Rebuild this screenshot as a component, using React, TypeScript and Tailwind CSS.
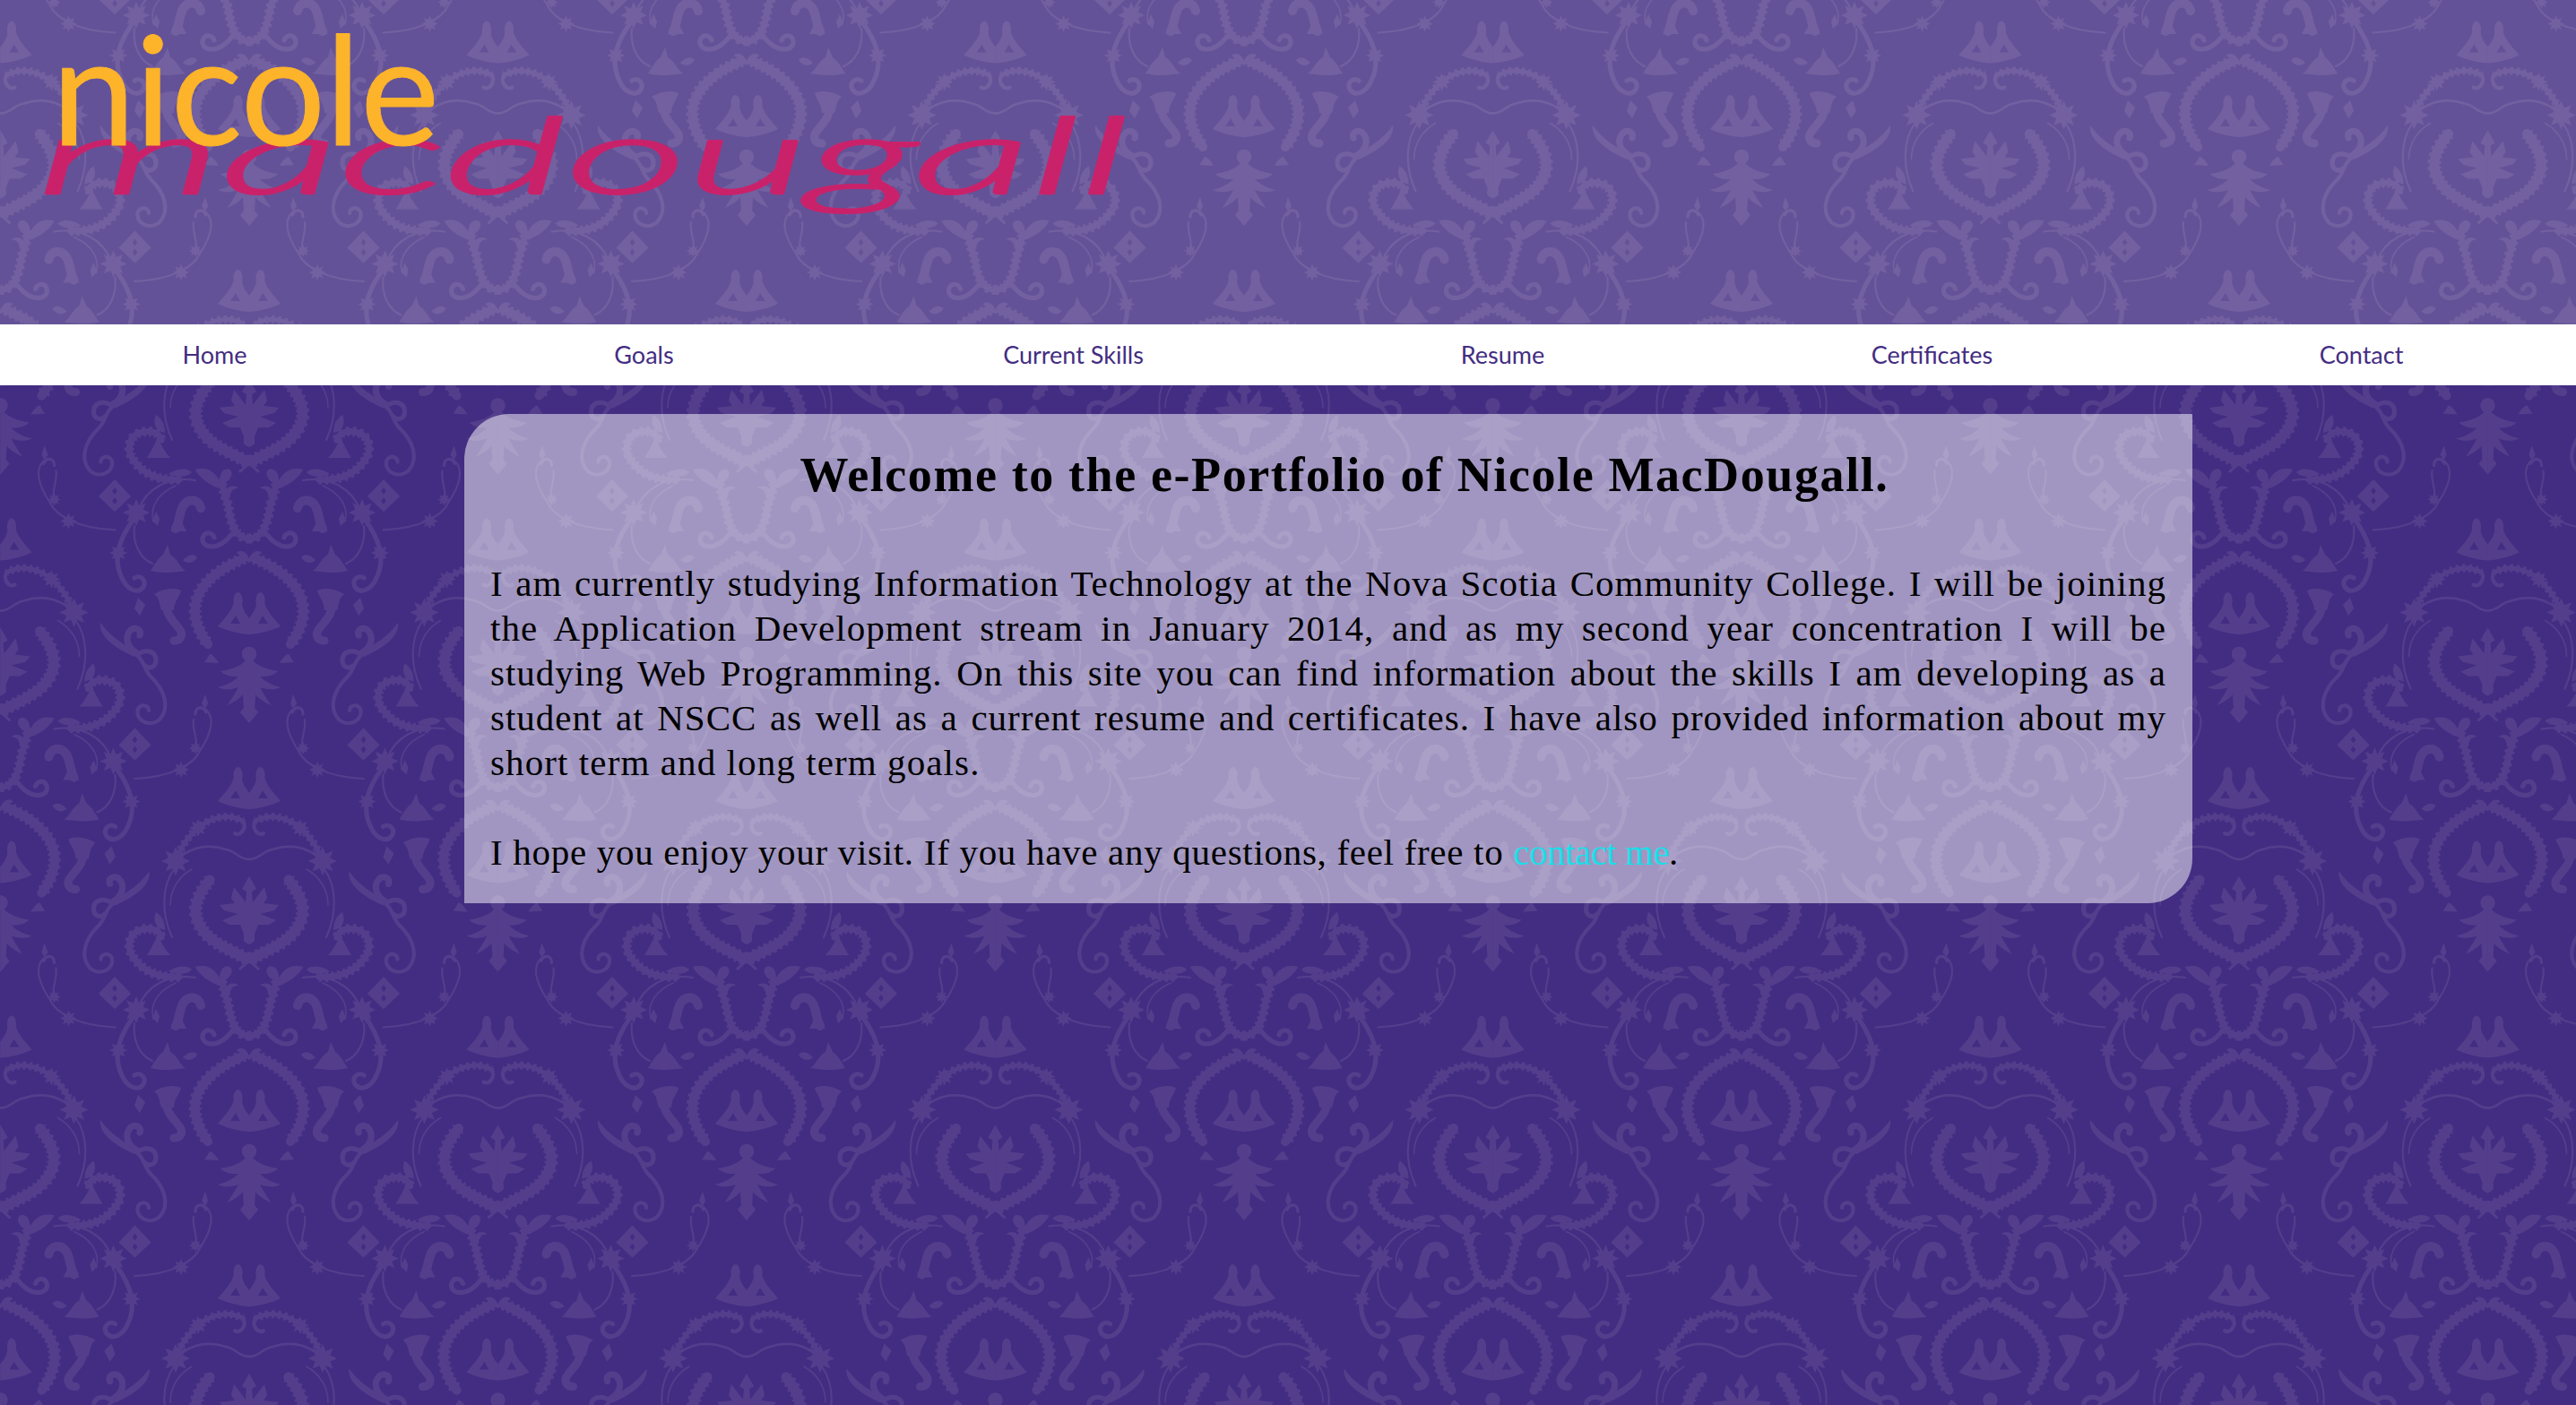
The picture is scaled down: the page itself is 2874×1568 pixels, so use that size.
import React from 'react';

const navItems = ['Home', 'Goals', 'Current Skills', 'Resume', 'Certificates', 'Contact'];

const introLines = [
  'I am currently studying Information Technology at the Nova Scotia Community College. I will be joining',
  'the Application Development stream in January 2014, and as my second year concentration I will be',
  'studying Web Programming. On this site you can find information about the skills I am developing as a',
  'student at NSCC as well as a current resume and certificates. I have also provided information about my',
];

const INK = '#543e8c';

// solid stroke plus a dashed wider one gives the ragged leaf edge of the damask
const Serr: React.FC<{ d: string; w: number }> = ({ d, w }) => (
  <>
    <path d={d} fill="none" stroke={INK} strokeWidth={w} strokeLinecap="round" />
    <path d={d} fill="none" stroke={INK} strokeWidth={w + 4} strokeDasharray="3 4" />
  </>
);

const Line: React.FC<{ d: string; w: number }> = ({ d, w }) => (
  <path d={d} fill="none" stroke={INK} strokeWidth={w} strokeLinecap="round" />
);

const Star: React.FC<{ x: number; y: number; r: number }> = ({ x, y, r }) => {
  const pts = Array.from({ length: 16 }, (_, i) => {
    const a = (i * Math.PI) / 8;
    const rad = i % 2 === 0 ? r : r * 0.55;
    return `${(x + Math.cos(a) * rad).toFixed(1)},${(y + Math.sin(a) * rad).toFixed(1)}`;
  }).join(' ');
  return <polygon points={pts} fill={INK} />;
};

const Figure: React.FC<{ dy: number }> = ({ dy }) => (
  <g transform={`translate(0 ${dy})`} fill={INK}>
    <ellipse cx="12.5" cy="75" rx="5" ry="9" />
    <path
      fillRule="evenodd"
      d="M0 113 C12 112 24 109 35 104 C30 98 26 94 22 88 C19 84 18 80 17 78 L8 78 C8 84 4 90 0 95 Z M10 101 L15 92 L21 101 Z"
    />
  </g>
);

// right half of one damask motif, origin at the bottom of the U
const Half: React.FC = () => (
  <g fill={INK}>
    {/* U tree */}
    <Serr d="M0 6 C8 6 13 2 17 -6 C23 -18 22 -30 26 -38 C29 -48 30 -52 30 -58" w={7} />
    <path d="M30 -52 C36 -68 46 -75 60 -71 C56 -62 44 -54 34 -50 Z" />
    <path d="M27 -56 C20 -60 17 -68 22 -71 C28 -73 33 -68 33 -58 Z" />
    <path d="M22 -40 C20 -48 18 -50 12 -50 C18 -55 26 -52 28 -44 Z" />
    <Line d="M17 -2 C24 8 32 15 42 15 C50 15 54 9 51 3 C48 -2 41 -1 39 5" w={5} />
    {/* hook */}
    <Line d="M54 -28 C56 -38 68 -40 74 -30 C78 -22 78 -12 82 -5" w={10} />
    <path d="M70 -2 L88 -2 L82 -10 L76 -14 Z" />
    {/* bell */}
    <path d="M71 42 C78 38 80 28 88 24 L91 13 L96 24 C102 28 106 36 110 42 C98 45 84 44 71 42 Z" />
    <path d="M58 27 C62 22 68 24 74 30 C68 35 62 33 58 27 Z" />
    {/* arch with figures */}
    <Serr d="M6 28 C24 36 48 48 58 72 C64 90 58 108 46 124" w={10} />
    <Line d="M0 31 C4 24 6 20 12 22" w={3} />
    <Figure dy={0} />
    {/* pendant */}
    <circle cx="0" cy="135" r="8" />
    <path d="M0 138 C8 148 18 152 32 154 C26 160 18 160 12 160 C20 168 28 170 35 172 C26 176 18 174 12 172 C16 180 22 188 24 192 C16 188 10 184 7 180 L6 195 L10 200 L0 212 Z" />
    <path d="M34 145 C38 138 42 135 44 135 C46 138 48 142 50 144 Z" />
    {/* side scroll by the arch */}
    <path d="M76 64 C84 60 96 62 106 68 C100 72 100 80 98 86 L84 86 C84 76 78 72 76 64 Z" />
    <Line d="M92 80 C94 92 80 102 76 110 C74 116 78 120 84 120" w={9} />
    <path d="M116 80 L124 72 L128 84 L122 92 Z" />
    {/* vine and flower */}
    <Line d="M60 -59 C90 -64 115 -50 124 -25" w={2} />
    <Line d="M82 -53 C98 -46 112 -32 107 -13" w={1.5} />
    <path d="M104 -24 L108 -14 L102 -8 L100 -16 Z" />
    <Star x={126} y={-23} r={15} />
    <Line d="M130 -14 C146 8 152 30 142 50 C136 64 124 68 118 60 C114 52 122 46 128 50" w={5} />
    <Star x={146} y={22} r={10} />
    <Line d="M128 -8 C130 12 122 28 108 34" w={2} />
    {/* big scroll */}
    <Serr d="M78 -60 C100 -58 118 -66 128 -80 C138 -92 134 -108 122 -112 C110 -116 100 -112 98 -104" w={7} />
    <path d="M88 -84 L114 -84 C110 -90 106 -98 102 -106 C98 -98 94 -90 88 -84 Z" />
    <path d="M64 -68 C70 -74 82 -72 90 -66 C80 -62 70 -62 64 -68 Z" />
    {/* diamond */}
    <path
      fillRule="evenodd"
      d="M132 -41 L150 -60 L168 -41 L150 -24 Z M147 -47 L150 -51 L153 -47 L150 -43 Z M147 -36 L150 -40 L153 -36 L150 -32 Z"
    />
    {/* S vine */}
    <path d="M166 100 C168 115 150 128 128 138 L124 132 C142 124 154 116 166 100 Z" />
    <Line d="M125 136 C115 146 118 152 110 160 C94 175 88 195 100 208 C112 218 128 208 124 196 C120 190 112 192 112 198" w={4} />
    <Line d="M125 136 C115 128 104 132 104 142 C104 150 112 152 116 148" w={5} />
    <Line d="M125 134 C136 128 140 116 132 108 C126 104 120 108 122 114" w={7} />
    {/* thin sprig */}
    <Line d="M48 197 C40 205 40 220 55 243 C62 258 85 272 128 274" w={2} />
    <Line d="M48 200 C52 192 60 194 60 202" w={3} />
    <Line d="M62 208 C64 220 56 232 60 240" w={2} />
    <path d="M46 190 L49 180 L53 190 L49 196 Z" />
    <Star x={60} y={240} r={7} />
    <Star x={76} y={264} r={9} />
    {/* heart above the U */}
    <Serr d="M3 -80 C24 -92 52 -100 59 -127 C62 -142 54 -156 44 -168" w={11} />
    <Line d="M0 -78 L10 -69" w={3} />
    <path d="M0 -172 L8 -158 L3 -155 L4 -143 L17 -160 L20 -148 L16 -142 L33 -140 L28 -134 L12 -130 L30 -123 L22 -118 L10 -118 L6 -108 L6 -100 L0 -96 Z" />
    <circle cx="0" cy="-103" r="6" />
    {/* ring round the heart */}
    <Serr d="M82 -189 C74 -212 54 -236 30 -238 C20 -240 12 -236 7 -234" w={5} />
    <Line d="M7 -234 C2 -226 10 -216 16 -220" w={4} />
    <Star x={82} y={-189} r={16} />
    <Star x={57} y={-226} r={10} />
    <Line d="M0 -191 C12 -191 14 -200 26 -202 C38 -206 56 -208 74 -196" w={2.5} />
    <Line d="M84 -180 C98 -160 98 -130 86 -104" w={2} />
    <Line d="M64 -180 C78 -172 88 -158 88 -140" w={1.5} />
    <path d="M94 -112 C94 -122 98 -128 104 -132 C108 -122 104 -114 94 -112 Z" />
    <Figure dy={-360} />
  </g>
);

const unitOffsets: [number, number][] = [
  [0, 0],
  [555, 0],
  [0, 555],
  [555, 555],
  [277.5, -277.5],
  [277.5, 277.5],
  [277.5, 832.5],
];

const Damask: React.FC = () => (
  <svg className="absolute inset-0 w-full h-full" aria-hidden="true">
    <defs>
      <g id="damask-half">
        <Half />
      </g>
      <g id="damask-unit">
        <use href="#damask-half" />
        <use href="#damask-half" transform="scale(-1 1)" />
      </g>
      <pattern
        id="damask"
        width="555"
        height="555"
        patternUnits="userSpaceOnUse"
        patternTransform="translate(278 40)"
      >
        {unitOffsets.map(([x, y]) => (
          <use key={`${x}-${y}`} href="#damask-unit" x={x} y={y} />
        ))}
      </pattern>
    </defs>
    <rect width="100%" height="100%" fill="url(#damask)" />
  </svg>
);

const Logo: React.FC = () => (
  <svg width="1300" height="362" className="block">
    <text
      x="42"
      y="216"
      fill="#c9226a"
      stroke="#c9226a"
      strokeWidth="2.5"
      strokeLinejoin="round"
      fontFamily="Lato, sans-serif"
      fontStyle="italic"
      fontWeight="300"
      fontSize="118"
      textLength="1218"
      lengthAdjust="spacingAndGlyphs"
    >
      macdougall
    </text>
    <text
      x="58"
      y="162"
      fill="#fdb42a"
      stroke="#fdb42a"
      strokeWidth="1"
      strokeLinejoin="round"
      fontFamily="Lato, sans-serif"
      fontSize="168"
      textLength="432"
      lengthAdjust="spacingAndGlyphs"
    >
      nicole
    </text>
  </svg>
);

const App: React.FC = () => {
  return (
    <div className="relative min-h-[1568px] overflow-hidden bg-[#432d82]">
      <Damask />
      <div className="relative">
        <header className="h-[362px] bg-white/[0.18]">
          <Logo />
        </header>
        <nav className="grid grid-cols-6 h-[68px] items-center bg-white pb-[2px]">
          {navItems.map((item) => (
            <a
              key={item}
              className="text-center text-[27px] leading-none text-[#432d82] font-['Lato',sans-serif]"
            >
              {item}
            </a>
          ))}
        </nav>
        <main className="ml-[518px] mt-[32px] w-[1928px] h-[546px] rounded-tl-[50px] rounded-br-[50px] bg-white/50 px-[29px] pt-[33px] text-black font-['Liberation_Serif',serif]">
          <h1 className="pl-[36px] text-center text-[54px] leading-[70px] tracking-[1.6px] font-bold mb-[61px]">
            Welcome to the e-Portfolio of Nicole MacDougall.
          </h1>
          <div className="text-[41px] leading-[50px] tracking-[1px] mb-[50px]">
            {introLines.map((line) => (
              <p key={line} className="text-justify [text-align-last:justify] whitespace-nowrap">
                {line}
              </p>
            ))}
            <p className="tracking-[1.1px]">short term and long term goals.</p>
          </div>
          <p className="text-[41px] leading-[50px] tracking-[0.7px]">
            I hope you enjoy your visit. If you have any questions, feel free to{' '}
            <a className="text-[#19dfe9] tracking-[-0.5px]">contact me</a>.
          </p>
        </main>
      </div>
    </div>
  );
};

export default App;
